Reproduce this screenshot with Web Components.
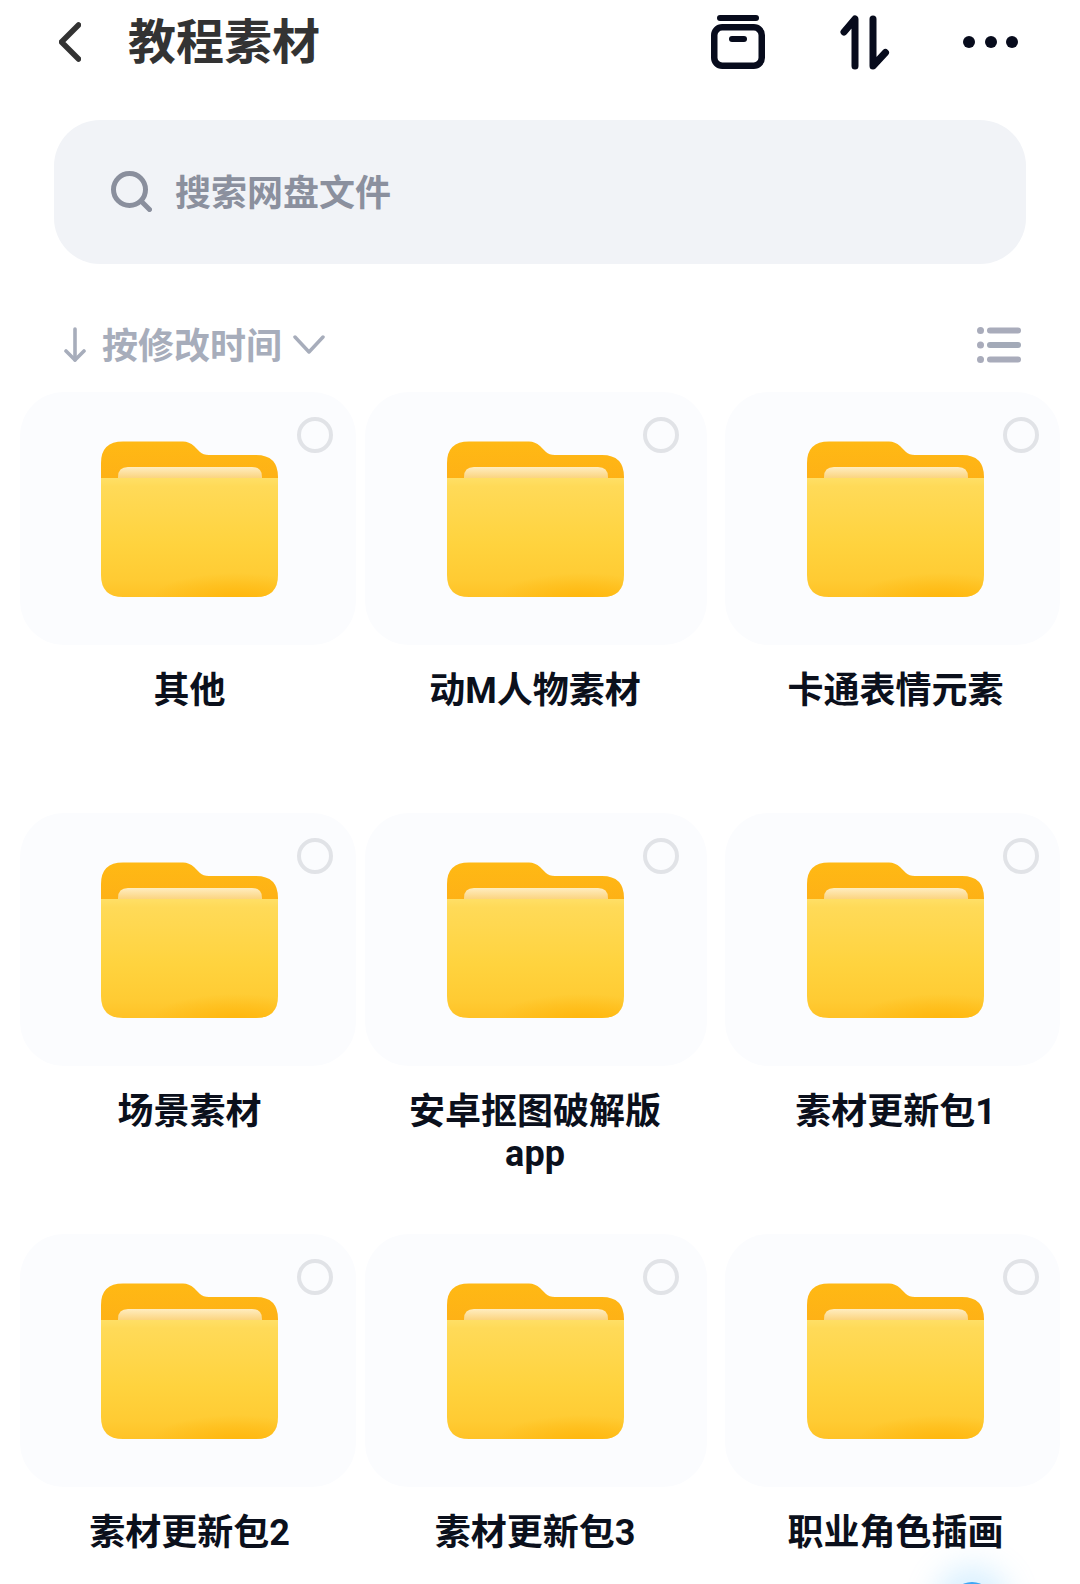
<!DOCTYPE html>
<html lang="zh-CN">
<head>
<meta charset="utf-8">
<title>教程素材</title>
<style>
  html, body { margin: 0; padding: 0; background: #fff; height: 1584px; overflow: hidden; }
  body { font-family: Roboto, "Noto Sans CJK SC", sans-serif; }
</style>
</head>
<body>
<disk-page>
  <disk-header slot="header" title="教程素材"></disk-header>
  <disk-search placeholder="搜索网盘文件"></disk-search>
  <disk-sort label="按修改时间"></disk-sort>
  <folder-grid>
    <folder-tile style="--shift:3px;--gap:9px;--dot:23px">其他</folder-tile>
    <folder-tile style="--back:2px;--gap:18px;--dot:28px">动M人物素材</folder-tile>
    <folder-tile style="--shift:6px;--gap:0px;--dot:21px">卡通表情元素</folder-tile>
    <folder-tile style="--shift:3px;--gap:9px;--dot:23px">场景素材</folder-tile>
    <folder-tile style="--back:2px;--gap:18px;--dot:28px">安卓抠图破解版app</folder-tile>
    <folder-tile style="--shift:6px;--gap:0px;--dot:21px">素材更新包1</folder-tile>
    <folder-tile style="--shift:3px;--gap:9px;--dot:23px">素材更新包2</folder-tile>
    <folder-tile style="--back:2px;--gap:18px;--dot:28px">素材更新包3</folder-tile>
    <folder-tile style="--shift:6px;--gap:0px;--dot:21px">职业角色插画</folder-tile>
  </folder-grid>
</disk-page>

<script>
class DiskPage extends HTMLElement {
    constructor() {
        super();
        this.attachShadow({mode: "open"}).innerHTML = `
            <style>
                :host {
                    display: block;
                    position: relative;
                    width: 1080px;
                    height: 1584px;
                    overflow: hidden;
                    background: #fff;
                }
                .glow {
                    position: absolute;
                    left: 951px;
                    top: 1582px;
                    width: 42px;
                    height: 42px;
                    border-radius: 50%;
                    background: #3fa7f4;
                    box-shadow: 0 0 30px 16px rgba(130, 205, 255, .3);
                }
            </style>
            <slot name="header"></slot>
            <slot></slot>
            <div class="glow"></div>`;
    }
}

class DiskHeader extends HTMLElement {
    constructor() {
        super();
        this.attachShadow({mode: "open"}).innerHTML = `
            <style>
                :host {
                    display: flex;
                    align-items: center;
                    height: 84px;
                    padding: 0 61px 0 59px;
                }
                .title {
                    margin-left: 47px;
                    padding-top: 2px;
                    font-size: 48px;
                    font-weight: 700;
                    color: #333;
                    line-height: 60px;
                }
                .actions {
                    margin-left: auto;
                    display: flex;
                    align-items: center;
                }
                .sort { margin: 0 73px 0 75px; }
                svg { display: block; }
            </style>
            <svg width="22" height="40" viewBox="0 0 22 40" fill="none" stroke="#333" stroke-width="5.5" stroke-linecap="round" stroke-linejoin="round">
                <path d="M19.5 3 L2.5 20 L19.5 37"/>
            </svg>
            <div class="title">${this.getAttribute("title")}</div>
            <div class="actions">
                <svg width="54" height="56" viewBox="0 0 54 56" fill="none" stroke="#070b1c" stroke-linecap="round">
                    <rect x="3.25" y="13.25" width="47.5" height="38.5" rx="8" stroke-width="6.5"/>
                    <path d="M9 4 H45" stroke-width="6"/>
                    <path d="M21 25 H33" stroke-width="6"/>
                </svg>
                <svg class="sort" width="50" height="56" viewBox="0 0 50 56" fill="none" stroke="#070b1c" stroke-width="7" stroke-linecap="round" stroke-linejoin="round">
                    <path d="M4 18 L15 5 V52"/>
                    <path d="M33 5 V52 L45.5 38.5"/>
                </svg>
                <svg width="56" height="12" viewBox="0 0 56 12" fill="#070b1c">
                    <circle cx="6" cy="6" r="6"/>
                    <circle cx="28" cy="6" r="6"/>
                    <circle cx="49" cy="6" r="6"/>
                </svg>
            </div>`;
    }
}

class DiskSearch extends HTMLElement {
    constructor() {
        super();
        this.attachShadow({mode: "open"}).innerHTML = `
            <style>
                :host {
                    display: flex;
                    align-items: center;
                    gap: 23px;
                    box-sizing: border-box;
                    width: 972px;
                    height: 144px;
                    margin: 36px 0 0 54px;
                    padding: 0 0 2px 57px;
                    border-radius: 46px;
                    background: #f1f3f7;
                    color: #8b909e;
                    font-size: 36px;
                    font-weight: 700;
                }
                span { padding-bottom: 2px; }
                svg { display: block; }
            </style>
            <svg width="41" height="41" viewBox="0 0 41 41" fill="none" stroke="#8a8f9d" stroke-width="5" stroke-linecap="round">
                <circle cx="18.5" cy="18.5" r="16"/>
                <path d="M30.5 30.5 L38.5 38.5"/>
            </svg>
            <span>${this.getAttribute("placeholder")}</span>`;
    }
}

class DiskSort extends HTMLElement {
    constructor() {
        super();
        this.attachShadow({mode: "open"}).innerHTML = `
            <style>
                :host {
                    display: flex;
                    align-items: center;
                    height: 56px;
                    margin-top: 53px;
                    padding: 0 59px 0 64px;
                    color: #a7adbb;
                    font-size: 36px;
                    font-weight: 700;
                }
                span { margin: 0 11px 0 16px; padding-bottom: 4px; }
                svg { display: block; }
                .list { margin-left: auto; }
            </style>
            <svg width="22" height="36" viewBox="0 0 22 36" fill="none" stroke="#a7adbb" stroke-width="3.6" stroke-linecap="round" stroke-linejoin="round">
                <path d="M11 2 V33"/>
                <path d="M2 24 L11 33 L20 24"/>
            </svg>
            <span>${this.getAttribute("label")}</span>
            <svg width="32" height="20" viewBox="0 0 32 20" fill="none" stroke="#a7adbb" stroke-width="3.5" stroke-linecap="round" stroke-linejoin="round">
                <path d="M2 2 L16 17 L30 2"/>
            </svg>
            <svg class="list" width="44" height="36" viewBox="0 0 44 36">
                <circle cx="3.5" cy="3.5" r="3.5" fill="#a9acbb"/>
                <circle cx="3.5" cy="18" r="3.5" fill="#a9acbb"/>
                <circle cx="3.5" cy="32.5" r="3.5" fill="#a9acbb"/>
                <rect x="10" y="0.5" width="34" height="6" rx="3" fill="#a9acbb"/>
                <rect x="10" y="15" width="34" height="6" rx="3" fill="#a3aab8"/>
                <rect x="10" y="29.5" width="34" height="6" rx="3" fill="#a9acbb"/>
            </svg>`;
    }
}

class FolderGrid extends HTMLElement {
    constructor() {
        super();
        this.attachShadow({mode: "open"}).innerHTML = `
            <style>
                :host {
                    display: grid;
                    grid-template-columns: 345px 360px 335px;
                    grid-auto-rows: 421px;
                    margin-top: 19px;
                    padding-left: 20px;
                }
            </style>
            <slot></slot>`;
    }
}

class FolderIcon extends HTMLElement {
    constructor() {
        super();
        this.attachShadow({mode: "open"}).innerHTML = `
            <style>
                :host { display: block; width: 177px; height: 157px; }
                svg { display: block; }
            </style>
            <svg width="177" height="157" viewBox="0 0 177 157">
                <defs>
                    <linearGradient id="back" x1="0" y1="0" x2="0" y2="1">
                        <stop offset="0" stop-color="#ffb914"/>
                        <stop offset="1" stop-color="#feb116"/>
                    </linearGradient>
                    <linearGradient id="paper" x1="0" y1="0" x2="0" y2="1">
                        <stop offset="0" stop-color="#ffedc0"/>
                        <stop offset="1" stop-color="#fbd27a"/>
                    </linearGradient>
                    <linearGradient id="front" x1="0" y1="0" x2="0" y2="1">
                        <stop offset="0" stop-color="#ffdf66"/>
                        <stop offset="0.07" stop-color="#ffda58"/>
                        <stop offset="0.55" stop-color="#ffd33e"/>
                        <stop offset="0.85" stop-color="#ffcb33"/>
                        <stop offset="1" stop-color="#ffc226"/>
                    </linearGradient>
                    <radialGradient id="corner" gradientUnits="userSpaceOnUse" cx="0" cy="0" r="1" gradientTransform="translate(135 159) scale(85 26)">
                        <stop offset="0" stop-color="#ffb406" stop-opacity=".8"/>
                        <stop offset="1" stop-color="#ffb406" stop-opacity="0"/>
                    </radialGradient>
                </defs>
                <path fill="url(#back)" d="M0 39 V23 Q0 1.5 22 1.5 H82 Q88 1.5 93 6 L99 12 Q102 15 108 15 H155 Q177 15 177 37 V39 Z"/>
                <path fill="url(#paper)" d="M17 39 V37 Q17 27 27 27 H151 Q161 27 161 37 V39 Z"/>
                <path fill="url(#front)" d="M0 38 H177 V135 Q177 157 155 157 H22 Q0 157 0 135 Z"/>
                <path fill="url(#corner)" d="M0 38 H177 V135 Q177 157 155 157 H22 Q0 157 0 135 Z"/>
            </svg>`;
    }
}

class FolderTile extends HTMLElement {
    constructor() {
        super();
        this.attachShadow({mode: "open"}).innerHTML = `
            <style>
                :host {
                    display: block;
                    padding-right: var(--gap, 0);
                }
                .card {
                    position: relative;
                    display: flex;
                    justify-content: center;
                    box-sizing: border-box;
                    height: 253px;
                    padding: 48px var(--back, 0) 0 var(--shift, 0);
                    border-radius: 44px;
                    background: #fbfcfe;
                }
                .check {
                    position: absolute;
                    top: 25px;
                    right: var(--dot, 23px);
                    box-sizing: border-box;
                    width: 36px;
                    height: 36px;
                    border: 4px solid #e1e3e7;
                    border-radius: 50%;
                }
                .label {
                    display: flex;
                    justify-content: center;
                    margin-top: 25px;
                    padding: 0 var(--back, 0) 0 var(--shift, 0);
                    color: #0b101c;
                    font-size: 36px;
                    font-weight: 700;
                    line-height: 42px;
                    text-align: center;
                }
                .label div { max-width: 280px; }
            </style>
            <div class="card">
                <folder-icon></folder-icon>
                <div class="check"></div>
            </div>
            <div class="label"><div><slot></slot></div></div>`;
    }
}

customElements.define("disk-page", DiskPage);
customElements.define("disk-header", DiskHeader);
customElements.define("disk-search", DiskSearch);
customElements.define("disk-sort", DiskSort);
customElements.define("folder-grid", FolderGrid);
customElements.define("folder-icon", FolderIcon);
customElements.define("folder-tile", FolderTile);
</script>
</body>
</html>
